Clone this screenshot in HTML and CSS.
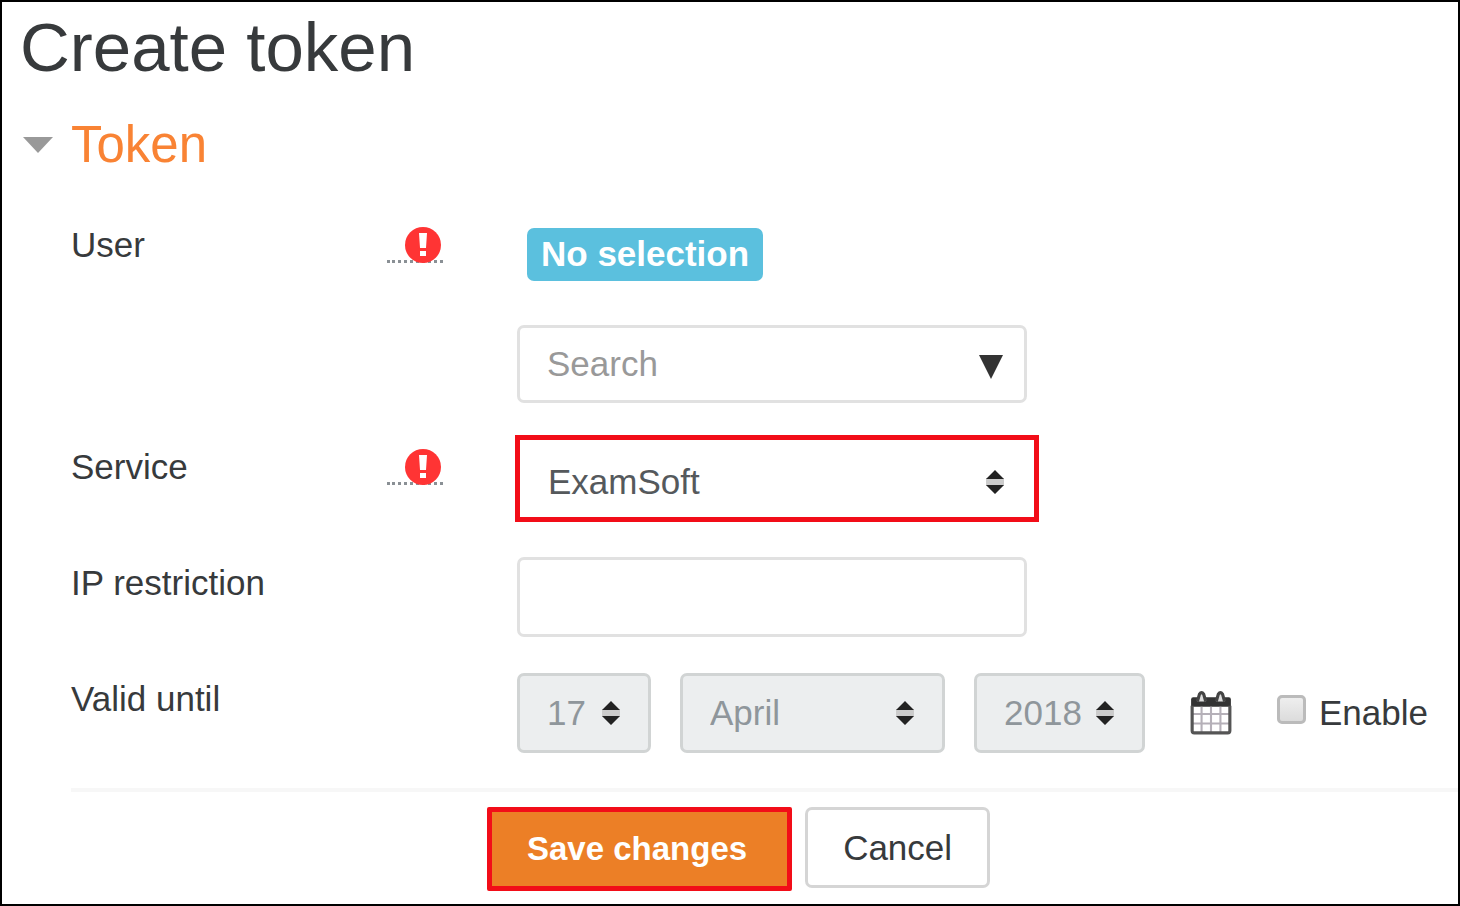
FILE: index.html
```html
<!DOCTYPE html>
<html lang="en">
  <head>
    <meta charset="UTF-8" />
    <meta name="viewport" content="width=device-width, initial-scale=1.0" />
    <title>Create token</title>
    <link rel="stylesheet" href="styles.css">
  </head>
  <body>
    <main class="page">
      <h1>Create token</h1>
      <form action="#" method="post">
        <h2>
          <a href="#token-fields" class="toggle">
            <svg class="caret" viewBox="0 0 30 16" aria-hidden="true"><path d="M0 0h30L15 16z" /></svg>
            <span>Token</span>
          </a>
        </h2>

        <div class="fields" id="token-fields">
          <div class="row">
            <div class="label">
              <label for="user">User</label>
              <a href="#user" class="required" aria-label="Required field">
                <svg viewBox="0 0 36 36" aria-hidden="true">
                  <circle cx="18" cy="18" r="18" />
                  <path d="M14 6h8l-1 15h-6zM15 24h6v5h-6z" />
                </svg>
              </a>
            </div>
            <div class="control user">
              <span class="badge">No selection</span>
              <div class="field search">
                <input type="text" id="user" placeholder="Search" />
                <button type="button" class="drop" aria-label="Show users">
                  <svg viewBox="0 0 24 24" aria-hidden="true"><path d="M0 0h24L12 24z" /></svg>
                </button>
              </div>
            </div>
          </div>

          <div class="row">
            <div class="label">
              <label for="service">Service</label>
              <a href="#service" class="required" aria-label="Required field">
                <svg viewBox="0 0 36 36" aria-hidden="true">
                  <circle cx="18" cy="18" r="18" />
                  <path d="M14 6h8l-1 15h-6zM15 24h6v5h-6z" />
                </svg>
              </a>
            </div>
            <div class="control">
              <div class="field service">
                <select id="service"><option>ExamSoft</option></select>
                <svg class="arrows" viewBox="0 0 18 24" aria-hidden="true">
                  <path class="band" d="M0 8h18v8H0z" />
                  <path d="M9 0l9 9H0zM0 15h18l-9 9z" />
                </svg>
              </div>
            </div>
          </div>

          <div class="row">
            <div class="label"><label for="ip">IP restriction</label></div>
            <div class="control">
              <div class="field"><input type="text" id="ip" /></div>
            </div>
          </div>

          <div class="row">
            <div class="label"><label for="day">Valid until</label></div>
            <div class="control date">
              <div class="field day">
                <select id="day" disabled><option>17</option></select>
                <svg class="arrows" viewBox="0 0 18 24" aria-hidden="true">
                  <path class="band" d="M0 8h18v8H0z" />
                  <path d="M9 0l9 9H0zM0 15h18l-9 9z" />
                </svg>
              </div>
              <div class="field month">
                <select aria-label="Month" disabled><option>April</option></select>
                <svg class="arrows" viewBox="0 0 18 24" aria-hidden="true">
                  <path class="band" d="M0 8h18v8H0z" />
                  <path d="M9 0l9 9H0zM0 15h18l-9 9z" />
                </svg>
              </div>
              <div class="field year">
                <select aria-label="Year" disabled><option>2018</option></select>
                <svg class="arrows" viewBox="0 0 18 24" aria-hidden="true">
                  <path class="band" d="M0 8h18v8H0z" />
                  <path d="M9 0l9 9H0zM0 15h18l-9 9z" />
                </svg>
              </div>
              <a href="#calendar" class="calendar" aria-label="Calendar">
                <svg viewBox="0 0 40 42" aria-hidden="true">
                  <path class="top" d="M1 15V8q0-2 2-2h34q2 0 2 2v7z" />
                  <path class="grid" d="M11 15v25M20 15v25M29 15v25M2 22h36M2 31h36" />
                  <path class="frame" d="M2 14v24q0 2 2 2h32q2 0 2-2V14" />
                  <path class="ring" d="M7 10l2-7q2-3 4 0l2 7M25 10l2-7q2-3 4 0l2 7" />
                </svg>
              </a>
              <label class="enable"><input type="checkbox" /> <span>Enable</span></label>
            </div>
          </div>
        </div>

        <div class="actions">
          <button type="submit" class="save">Save changes</button>
          <button type="button" class="cancel">Cancel</button>
        </div>
      </form>
    </main>
  </body>
</html>
```
FILE: styles.css
```css
* {
  margin: 0;
  padding: 0;
  box-sizing: border-box;
}
body {
  font-family: "Liberation Sans", Arial, sans-serif;
  font-size: 35px;
  line-height: 42px;
  color: #373a3c;
  background: #fff;
}
svg {
  display: block;
}
.page {
  min-height: 100vh;
  border: 2px solid #000;
  padding-top: 4px;
}
h1 {
  padding-left: 18px;
  font-size: 69px;
  line-height: 84px;
  font-weight: normal;
}
h2 {
  margin-top: 25px;
  padding-left: 21px;
  font-size: 51px;
  line-height: 60px;
  font-weight: normal;
}
.toggle {
  display: flex;
  align-items: center;
  gap: 18px;
  color: #f98334;
  text-decoration: none;
}
.caret {
  width: 30px;
  height: 16px;
  fill: #999;
}

/* form rows */
.fields {
  display: flex;
  flex-direction: column;
  gap: 36px;
  margin: 44px 0 0 69px;
  padding-bottom: 35px;
  border-bottom: 4px solid #f7f7f7;
}
.row {
  display: grid;
  grid-template-columns: 446px 1fr;
}
.label {
  display: flex;
  justify-content: space-between;
  align-items: flex-start;
  padding: 5px 74px 0 0;
}
.required {
  width: 56px;
  height: 39px;
  padding: 3px 2px 0 18px;
  border-bottom: 3px dotted #8a9095;
}
.required svg {
  width: 36px;
  height: 36px;
  fill: #ff3434;
}
.required path {
  fill: #fff;
}
.user {
  padding: 9px 0 2px;
}
.badge {
  display: inline-block;
  margin: 0 0 44px 10px;
  padding: 5px 14px 6px;
  border-radius: 7px;
  background: #5bc0de;
  color: #fff;
  font-weight: bold;
}

/* controls */
.field {
  position: relative;
  width: 510px;
  height: 80px;
}
.field input,
.field select {
  display: block;
  width: 100%;
  height: 100%;
  padding: 0 27px;
  border: 3px solid #e1e1e1;
  border-radius: 7px;
  background: #fff;
  color: #55595c;
  font: inherit;
  appearance: none;
}
.field input::placeholder {
  color: #999;
}
.field select:disabled {
  border-color: #d1d4d4;
  background: #eceeef;
  color: #8f969b;
  opacity: 1;
}
.search {
  height: 78px;
}
.drop {
  position: absolute;
  top: 30px;
  right: 24px;
  border: 0;
  background: none;
}
.drop svg {
  width: 24px;
  height: 24px;
  fill: #333;
}
.arrows {
  position: absolute;
  top: 28px;
  right: 31px;
  width: 18px;
  height: 24px;
  fill: #222;
  pointer-events: none;
}
.arrows .band {
  fill: #ccc;
}
.service {
  width: 524px;
  height: 87px;
  margin: -6px 0 -1px -2px;
}
.service select {
  padding: 7px 28px 0;
  border: 5px solid #f20d18;
  border-radius: 0;
}
.service .arrows {
  top: 35px;
  right: 35px;
}
.date {
  display: flex;
  align-items: center;
  gap: 29px;
}
.day {
  width: 134px;
}
.month {
  width: 265px;
}
.year {
  width: 171px;
}
.calendar {
  margin: 0 16px;
}
.calendar svg {
  width: 42px;
  height: 44px;
  fill: none;
  stroke: #555;
  stroke-width: 3;
}
.calendar .top {
  fill: #333;
  stroke: none;
}
.calendar .grid {
  stroke: #b5b0b8;
  stroke-width: 2;
}
.calendar .ring {
  fill: #ddd;
  stroke: #444;
}
.enable {
  display: flex;
  gap: 13px;
}
.enable input {
  width: 29px;
  height: 29px;
  margin-top: 3px;
  border: 3px solid #bbb;
  border-radius: 5px;
  background: linear-gradient(#eee, #dcdcdc);
  appearance: none;
}

.actions {
  display: flex;
  align-items: flex-start;
  gap: 13px;
  padding: 15px 0 13px 485px;
}
.actions button {
  height: 81px;
  padding: 0 35px;
  border: 3px solid #d5d5d5;
  border-radius: 7px;
  background: #fff;
  color: #373a3c;
  font: inherit;
}
.actions .save {
  height: 84px;
  padding-right: 40px;
  border: 5px solid #f20d18;
  border-radius: 2px;
  background: #ec7f26;
  color: #fff;
  font-size: 33px;
  font-weight: bold;
}
```
